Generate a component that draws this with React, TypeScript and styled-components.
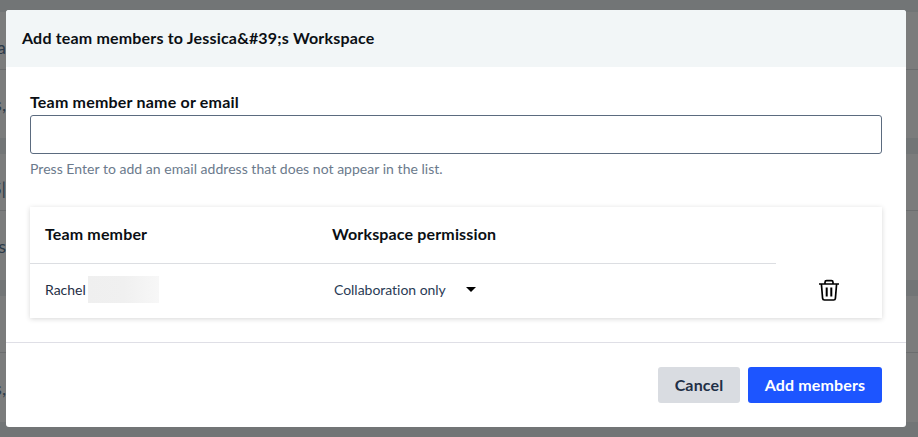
import React, { FC } from "react";
import styled, { createGlobalStyle } from "styled-components";

const GlobalStyle = createGlobalStyle`
  html, body {
    margin: 0;
    padding: 0;
    height: 100%;
    overflow: hidden;
    background: #7b7c7c;
    font-family: "Lato", "Open Sans", sans-serif;
  }
`;

const pageRows = [
  { height: 12, shaded: true, line: false, text: "", offset: 0 },
  { height: 58, shaded: false, line: true, text: "a", offset: 12 },
  { height: 68, shaded: false, line: false, text: "s,", offset: 0 },
  { height: 16, shaded: true, line: false, text: "", offset: 0 },
  { height: 57, shaded: false, line: true, text: "S|", offset: 11 },
  { height: 69, shaded: false, line: false, text: "s", offset: 0 },
  { height: 16, shaded: true, line: false, text: "", offset: 0 },
  { height: 57, shaded: false, line: true, text: "", offset: 0 },
  { height: 69, shaded: false, line: false, text: "s,", offset: 0 },
  { height: 15, shaded: true, line: false, text: "", offset: 0 },
];

const App: FC = () => {
  return (
    <>
      <GlobalStyle />
      <BehindPage>
        {pageRows.map((row, i) => (
          <PageRow key={i} $height={row.height} $shaded={row.shaded} $line={row.line} $offset={row.offset}>
            <PageRowText>{row.text}</PageRowText>
          </PageRow>
        ))}
      </BehindPage>
      <Overlay>
        <Modal>
          <ModalHeader>Add team members to Jessica&amp;#39;s Workspace</ModalHeader>
          <ModalBody>
            <FieldLabel>Team member name or email</FieldLabel>
            <TextInput type="text" />
            <Hint>Press Enter to add an email address that does not appear in the list.</Hint>
            <MemberCard>
              <MemberTable>
                <HeaderRow>
                  <NameCell>Team member</NameCell>
                  <div>Workspace permission</div>
                </HeaderRow>
                <MemberRow>
                  <NameCell>
                    Rachel
                    <Redacted />
                  </NameCell>
                  <PermissionSelect>
                    Collaboration only
                    <Caret />
                  </PermissionSelect>
                </MemberRow>
              </MemberTable>
              <DeleteColumn>
                <TrashIcon width="22" height="22" viewBox="0 0 22 22">
                  <path d="M1 5h20" />
                  <path d="M7 5V3.2C7 2.3 7.7 1.6 8.6 1.6h4.8c.9 0 1.6.7 1.6 1.6V5" />
                  <path d="M3.4 5l1.2 14.4c.1 1 .9 1.6 1.8 1.6h9.2c.9 0 1.7-.6 1.8-1.6L18.6 5" />
                  <path d="M8.7 8.5v9M13.3 8.5v9" strokeWidth="2" />
                </TrashIcon>
              </DeleteColumn>
            </MemberCard>
          </ModalBody>
          <ModalFooter>
            <CancelButton>Cancel</CancelButton>
            <PrimaryButton>Add members</PrimaryButton>
          </ModalFooter>
        </Modal>
      </Overlay>
    </>
  );
};

const BehindPage = styled.div`
  display: flex;
  flex-direction: column;
  height: 437px;
  overflow: hidden;
`;
const PageRow = styled.div<{ $height: number; $shaded: boolean; $line: boolean; $offset: number }>`
  height: ${(p) => p.$height}px;
  flex: none;
  box-sizing: border-box;
  padding-top: ${(p) => p.$offset}px;
  display: flex;
  align-items: center;
  justify-content: flex-start;
  background: ${(p) => (p.$shaded ? "#727576" : "transparent")};
  border-bottom: ${(p) => (p.$line ? "1px solid #6b6d6e" : "none")};
`;
const PageRowText = styled.div`
  width: 6px;
  display: flex;
  justify-content: flex-end;
  overflow: hidden;
  font-size: 18px;
  color: #2c3a48;
  white-space: nowrap;
`;
const Overlay = styled.div`
  position: fixed;
  top: 0;
  left: 0;
  right: 0;
  bottom: 0;
  padding: 10px 12px 10px 6px;
`;
const Modal = styled.div`
  width: 900px;
  height: 417px;
  background: #fff;
  border-radius: 3px;
  overflow: hidden;
  display: flex;
  flex-direction: column;
`;
const ModalHeader = styled.div`
  height: 57px;
  flex: none;
  box-sizing: border-box;
  padding: 0 0 3px 16px;
  display: flex;
  align-items: center;
  background: #f2f6f7;
  color: #0b0f14;
  font-size: 16px;
  font-weight: 700;
  letter-spacing: 0.18px;
`;
const ModalBody = styled.div`
  height: 276px;
  flex: none;
  box-sizing: border-box;
  padding: 25px 24px 0;
  border-bottom: 1px solid #dfdfe6;
`;
const FieldLabel = styled.div`
  height: 23px;
  line-height: 20px;
  font-size: 16px;
  font-weight: 700;
  letter-spacing: 0.2px;
  color: #0b0f14;
`;
const TextInput = styled.input`
  display: block;
  width: 100%;
  height: 39px;
  box-sizing: border-box;
  border: 1px solid #5b6b7f;
  border-radius: 3px;
  background: #fff;
  outline: none;
`;
const Hint = styled.div`
  margin-top: 6px;
  height: 20px;
  line-height: 18px;
  font-size: 14px;
  letter-spacing: 0.03px;
  color: #6b7a8c;
`;
const MemberCard = styled.div`
  margin-top: 27px;
  height: 111px;
  display: flex;
  background: #fff;
  box-shadow: 0 1px 5px rgba(0, 0, 0, 0.16);
`;
const MemberTable = styled.div`
  width: 746px;
  flex: none;
`;
const HeaderRow = styled.div`
  height: 57px;
  box-sizing: border-box;
  display: flex;
  align-items: center;
  padding-left: 15px;
  padding-bottom: 3px;
  border-bottom: 1px solid #dcdee2;
  font-size: 16px;
  font-weight: 700;
  letter-spacing: 0.15px;
  color: #0b0f14;
`;
const NameCell = styled.div`
  width: 287px;
  flex: none;
  display: flex;
  align-items: center;
`;
const MemberRow = styled.div`
  height: 54px;
  box-sizing: border-box;
  padding: 0 0 4px 15px;
  display: flex;
  align-items: center;
  font-size: 14px;
  color: #1f2f46;
`;
const Redacted = styled.span`
  width: 71px;
  height: 27px;
  margin-left: 2px;
  background: linear-gradient(90deg, #efefef 0%, #f0f0f0 50%, #f7f7f7 100%);
`;
const PermissionSelect = styled.div`
  display: flex;
  align-items: center;
  margin-left: 2px;
  letter-spacing: -0.03px;
  color: #2a3b55;
`;
const Caret = styled.span`
  width: 0;
  height: 0;
  margin-left: 20px;
  border-left: 5px solid transparent;
  border-right: 5px solid transparent;
  border-top: 5px solid #000;
`;
const DeleteColumn = styled.div`
  flex: 1;
  display: flex;
  align-items: flex-end;
  justify-content: center;
  padding-bottom: 17px;
`;
const TrashIcon = styled.svg`
  fill: none;
  stroke: #000;
  stroke-width: 1.7;
`;
const ModalFooter = styled.div`
  flex: 1;
  display: flex;
  justify-content: flex-end;
  gap: 8px;
  padding: 24px 24px 0;
`;
const CancelButton = styled.button`
  width: 82px;
  height: 36px;
  padding: 0 0 2px;
  border: none;
  border-radius: 3px;
  background: #d9dce1;
  color: #1f2f46;
  font-family: inherit;
  font-size: 16px;
  font-weight: 700;
  letter-spacing: 0.15px;
`;
const PrimaryButton = styled(CancelButton)`
  width: 134px;
  background: #1d55ff;
  color: #fff;
`;

export default App;
